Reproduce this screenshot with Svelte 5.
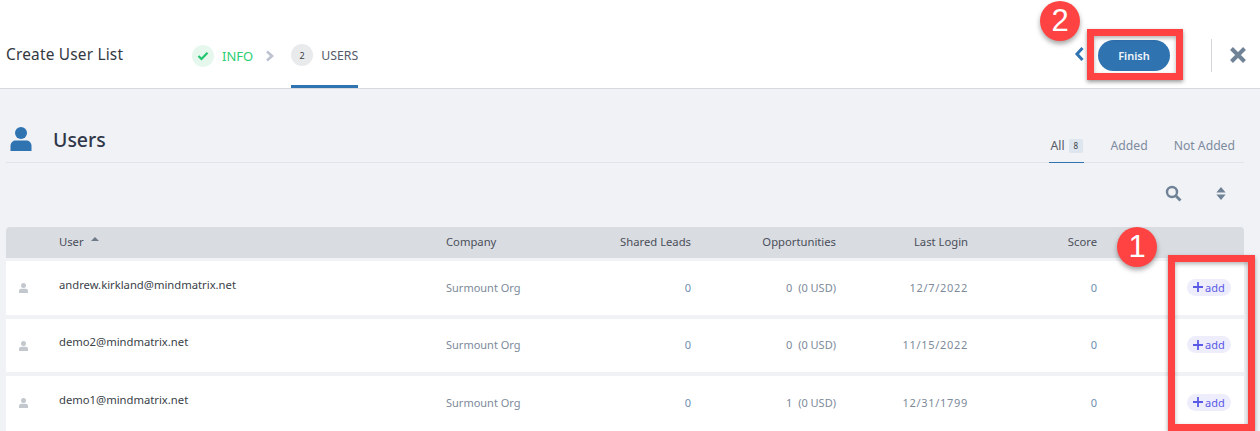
<script>
	const users = [
		{ email: 'andrew.kirkland@mindmatrix.net', opps: 0, login: '12/7/2022' },
		{ email: 'demo2@mindmatrix.net', opps: 0, login: '11/15/2022' },
		{ email: 'demo1@mindmatrix.net', opps: 1, login: '12/31/1799' }
	];
</script>

<div class="page">
	<header class="topbar">
		<h1>Create User List</h1>
		<nav class="steps">
			<div class="step done">
				<span class="dot">
					<svg width="12" height="10" viewBox="0 0 12 10"><path d="M1.5 5l3 3 6-6.2" fill="none" stroke="#1fc56e" stroke-width="2.2" /></svg>
				</span>
				<span>INFO</span>
			</div>
			<svg class="chev" width="10" height="12" viewBox="0 0 10 12"><path d="M2 1.5L7 6l-5 4.5" fill="none" stroke="#bcc3cf" stroke-width="2.6" /></svg>
			<div class="step current">
				<span class="dot">2</span>
				<span>USERS</span>
			</div>
		</nav>
		<div class="actions">
			<svg class="back" width="11" height="16" viewBox="0 0 11 16"><path d="M8.5 2L3 8l5.500 6" fill="none" stroke="#2f73b1" stroke-width="3" /></svg>
			<button class="finish">Finish</button>
			<span class="divider"></span>
			<svg class="close" width="18" height="18" viewBox="0 0 18 18"><path d="M2.500 2.500l13 13M15.500 2.500l-13 13" fill="none" stroke="#6f8296" stroke-width="4" /></svg>
		</div>
	</header>

	<main>
		<section class="title-row">
			<div class="title">
				<svg width="22" height="24" viewBox="0 0 22 24">
					<circle cx="11" cy="6" r="6" fill="#2f73b1" />
					<path d="M0.500 24v-5c0-3.500 2.500-5.500 5.500-5.500h10c3 0 5.500 2 5.500 5.500v5z" fill="#2f73b1" />
				</svg>
				<h2>Users</h2>
			</div>
			<div class="tabs">
				<span class="tab active">All <em>8</em></span>
				<span class="tab">Added</span>
				<span class="tab">Not Added</span>
			</div>
		</section>

		<div class="tools">
			<svg width="17" height="17" viewBox="0 0 17 17">
				<circle cx="7" cy="7" r="5" fill="none" stroke="#6f8296" stroke-width="2.400" />
				<path d="M10.800 10.800L15.500 15.500" stroke="#6f8296" stroke-width="2.800" />
			</svg>
			<svg width="10" height="13" viewBox="0 0 10 14">
				<path d="M5 0l5 6H0zM0 8h10l-5 6z" fill="#6f8296" />
			</svg>
		</div>

		<div class="table">
			<div class="row head">
				<span></span>
				<span class="user-head">User <i class="sort"></i></span>
				<span>Company</span>
				<span class="num">Shared Leads</span>
				<span class="num">Opportunities</span>
				<span class="num">Last Login</span>
				<span class="num">Score</span>
				<span></span>
			</div>
			{#each users as u}
				<div class="row body">
					<svg class="avatar" width="9" height="10" viewBox="0 0 9 10">
						<circle cx="4.500" cy="2.500" r="2.500" fill="#c3c8ce" />
						<path d="M0 10V8c0-1.500 1-2.300 2.300-2.300h4.400C8 5.700 9 6.500 9 8v2z" fill="#c3c8ce" />
					</svg>
					<span class="email">{u.email}</span>
					<span class="muted">Surmount Org</span>
					<span class="num link">0</span>
					<span class="num muted"><b>{u.opps}</b>&nbsp; (0 USD)</span>
					<span class="num muted date">{u.login}</span>
					<span class="num link">0</span>
					<span class="cell-add">
						<button class="add"><svg width="10" height="10" viewBox="0 0 10 10"><path d="M5 0v10M0 5h10" stroke="#5a5ae6" stroke-width="1.800" /></svg>add</button>
					</span>
				</div>
			{/each}
		</div>
	</main>

	<!-- screenshot callouts -->
	<div class="mark box-finish"></div>
	<div class="mark box-add"></div>
	<div class="badge badge-2">2</div>
	<div class="badge badge-1">1</div>
</div>

<style>
	:global(body) {
		margin: 0;
		background: #f0f2f6;
		overflow: hidden;
	}

	.page {
		position: relative;
		width: 1260px;
		height: 431px;
		overflow: hidden;
		background: #f0f2f6;
		font-family: 'Noto Sans', 'Open Sans', sans-serif;
		color: #2f3542;
	}

	.topbar {
		display: flex;
		align-items: flex-start;
		height: 89px;
		box-sizing: border-box;
		background: #fff;
		border-bottom: 1px solid #d5d9df;
		padding-left: 6px;
	}

	h1 {
		margin: 0;
		width: 186px;
		height: 88px;
		line-height: 110px;
		font-size: 15.4px;
		font-weight: 400;
		color: #33383f;
		letter-spacing: 0.2px;
	}

	.steps {
		display: flex;
		align-items: center;
		height: 88px;
	}

	.step {
		display: flex;
		align-items: center;
		gap: 8px;
		font-size: 12.3px;
	}

	.dot {
		width: 22px;
		height: 22px;
		border-radius: 50%;
		display: flex;
		align-items: center;
		justify-content: center;
		font-size: 9px;
	}

	.done {
		color: #2bce72;
		font-size: 13px;
		height: 88px;
		box-sizing: border-box;
		padding-top: 24px;
	}

	.done .dot {
		background: #e6f8ee;
	}

	.chev {
		margin: 24px 16px 0 12px;
	}

	.current {
		height: 88px;
		box-sizing: border-box;
		border-bottom: 3px solid #2f73b1;
		color: #555b66;
		padding-top: 25px;
	}

	.current .dot {
		background: #e9eaec;
		color: #3a3f48;
	}

	.actions {
		margin-left: auto;
		display: flex;
		align-items: center;
		height: 88px;
		box-sizing: border-box;
		padding: 22px 13px 0 0;
	}

	.back {
		margin-right: 13px;
		margin-top: -3px;
	}

	.finish {
		width: 72px;
		height: 31px;
		border: 0;
		border-radius: 16px;
		background: #2f73b1;
		color: #f2f6fa;
		font: 600 11px 'Noto Sans', sans-serif;
	}

	.divider {
		width: 1px;
		height: 33px;
		background: #d5d9df;
		margin: 0 17px 0 41px;
	}

	main {
		padding: 0 16px 0 6px;
	}

	.title-row {
		display: flex;
		justify-content: space-between;
		align-items: flex-end;
		height: 73px;
		border-bottom: 1px solid #e1e4ea;
	}

	.title {
		display: flex;
		align-items: center;
		gap: 21px;
		padding: 0 0 11px 4px;
	}

	h2 {
		margin: 0;
		font-size: 19.5px;
		font-weight: 500;
		color: #2f3648;
		line-height: 24px;
		transform: translateY(1px);
	}

	.tabs {
		display: flex;
		gap: 26px;
		font-size: 12.2px;
		color: #7d8b9d;
		margin-right: 9px;
	}

	.tab {
		padding-bottom: 8px;
		height: 17px;
		line-height: 17px;
		margin-bottom: -1px;
		white-space: nowrap;
	}

	.active {
		color: #555b66;
		border-bottom: 1px solid #2f73b1;
		width: 34px;
		padding-left: 1px;
	}

	.active em {
		display: inline-block;
		width: 14px;
		height: 14px;
		line-height: 14px;
		text-align: center;
		margin-left: 1px;
		font-style: normal;
		font-size: 8px;
		border-radius: 2px;
		background: #dde5ee;
		color: #3a3f48;
		vertical-align: 1px;
	}

	.tools {
		display: flex;
		justify-content: flex-end;
		align-items: center;
		gap: 34px;
		height: 64px;
		box-sizing: border-box;
		padding: 0 18px 4px 0;
	}

	.row {
		display: grid;
		grid-template-columns: 53px 387px 135px 110px 145px 132px 129px 1fr;
		align-items: center;
		font-size: 11.25px;
		width: 1238px;
		box-sizing: border-box;
	}

	.head {
		height: 31px;
		padding-bottom: 2px;
		background: #d9dce1;
		border-radius: 4px 4px 0 0;
		color: #4a4f59;
		margin-bottom: 3px;
	}

	.user-head {
		display: flex;
		align-items: center;
		gap: 7px;
	}

	.sort {
		width: 0;
		height: 0;
		border: 4px solid transparent;
		border-top: 0;
		border-bottom: 4px solid #6f7a88;
		margin-bottom: 6px;
	}

	.body {
		height: 53.5px;
		padding-bottom: 1px;
		background: #fff;
		margin-bottom: 4px;
	}

	.body:last-child {
		height: 60px;
		padding-bottom: 7.5px;
	}

	.avatar {
		margin: 2px 0 0 13px;
	}

	.email {
		color: #3a3f48;
		margin-top: -6px;
	}

	.num {
		text-align: right;
	}

	.muted {
		color: #7d8a9b;
		font-size: 11px;
	}

	.muted b {
		font-weight: 400;
	}

	.date {
		letter-spacing: 0.7px;
	}

	.link {
		color: #6d8fb0;
		font-size: 11px;
	}

	.cell-add {
		padding-left: 90px;
	}

	.add {
		display: flex;
		align-items: center;
		gap: 2px;
		width: 44px;
		height: 17px;
		padding: 0 0 0 6px;
		border: 0;
		border-radius: 9px;
		background: #eeedfb;
		color: #5a5ae6;
		font: 400 11px 'Noto Sans', sans-serif;
	}

	.mark {
		position: absolute;
		box-sizing: border-box;
		border: 7px solid #ff4343;
		box-shadow: 0 2px 4px rgba(0, 0, 0, 0.4), inset 0 2px 4px rgba(0, 0, 0, 0.3);
	}

	.box-finish {
		left: 1087px;
		top: 29px;
		width: 96px;
		height: 51px;
	}

	.box-add {
		left: 1168px;
		top: 255px;
		width: 87px;
		height: 176px;
	}

	.badge {
		position: absolute;
		width: 40px;
		height: 40px;
		border-radius: 50%;
		background: #ff4343;
		color: #fff;
		font: 400 31px/40px 'Liberation Sans', sans-serif;
		text-align: center;
		box-shadow: 0 3px 5px rgba(0, 0, 0, 0.35);
	}

	.badge-2 {
		left: 1040px;
		top: 1px;
	}

	.badge-1 {
		left: 1117px;
		top: 227px;
	}
</style>
